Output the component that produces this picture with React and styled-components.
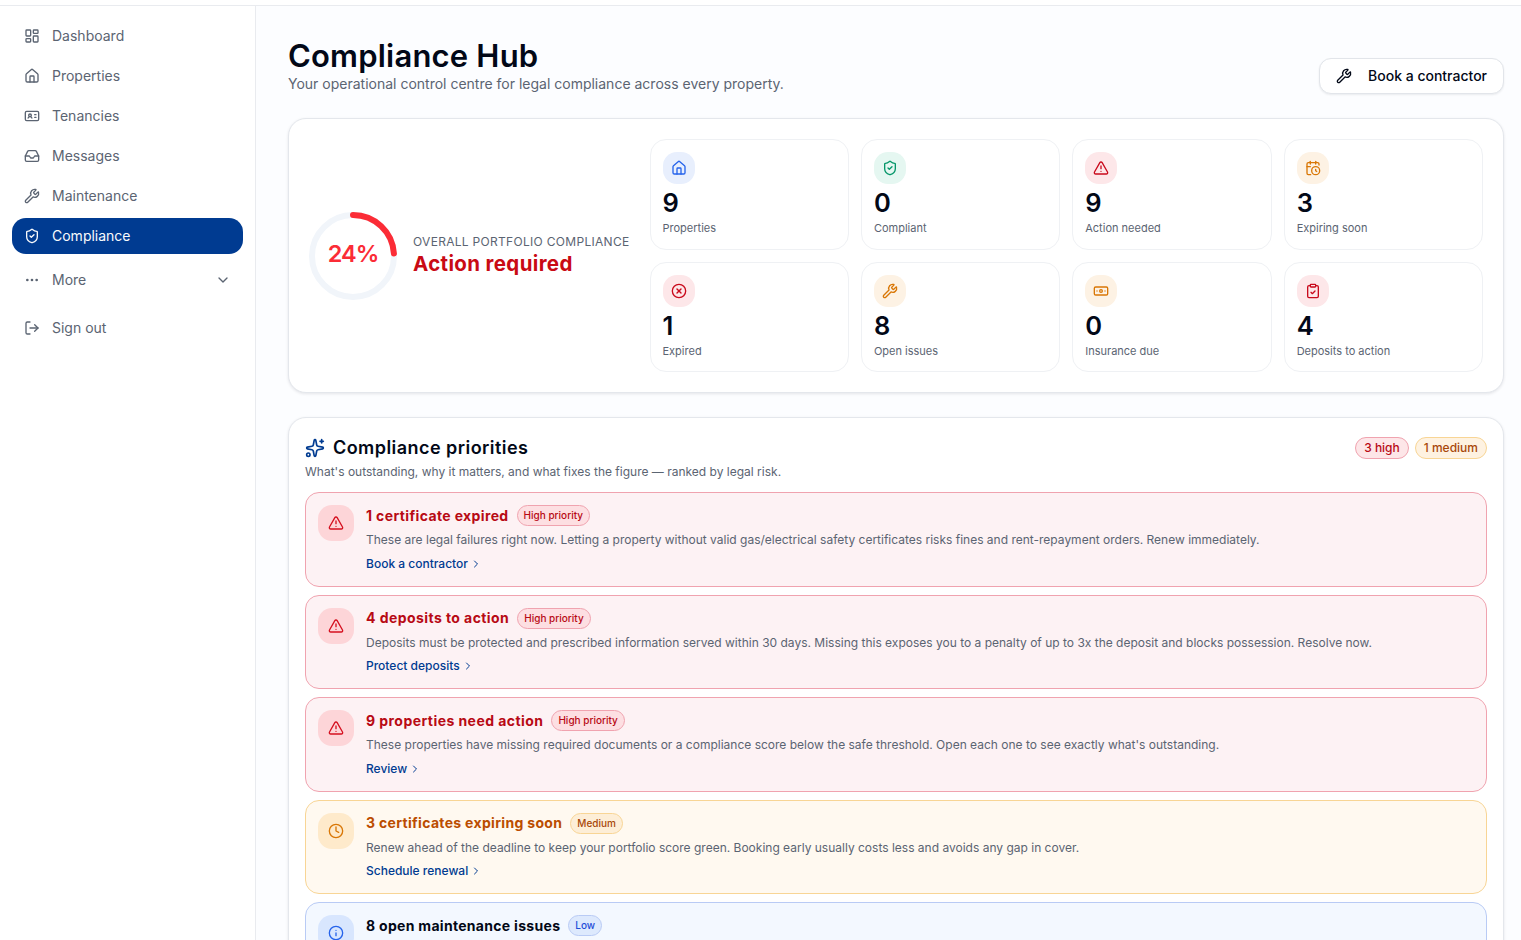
import React from 'react';
import styled, { createGlobalStyle, css } from 'styled-components';
import {
  LayoutDashboard,
  House,
  IdCard,
  Inbox,
  Wrench,
  ShieldCheck,
  Ellipsis,
  LogOut,
  ChevronDown,
  ChevronRight,
  TriangleAlert,
  CalendarClock,
  CircleX,
  Banknote,
  ClipboardCheck,
  Sparkles,
  Clock,
  Info,
} from 'lucide-react';

const GlobalStyle = createGlobalStyle`
  *, *::before, *::after {
    box-sizing: border-box;
  }

  body {
    margin: 0;
    height: 940px;
    overflow: hidden;
    background: #fcfdff;
    color: #020817;
    font-family: Inter, 'Liberation Sans', sans-serif;
    font-size: 14px;
    line-height: 20px;
  }

  h1, h2, h3, p {
    margin: 0;
  }

  svg {
    display: block;
    flex-shrink: 0;
  }
`;

const tones = {
  blue: { icon: '#2563eb', soft: '#e8effd' },
  green: { icon: '#059669', soft: '#e5f7f1' },
  red: { icon: '#c90a1c', soft: '#fde7e9' },
  amber: { icon: '#d97706', soft: '#fdf2e4' },
};

const levels = {
  high: { title: '#b80a14', bg: '#fdf2f4', border: '#f0a3af', tile: '#fdd5d8', icon: '#d5101f', badge: '#fddfe2', pill: '#fde6e8', badgeText: '#b80a14' },
  medium: { title: '#bb4d00', bg: '#fff9f0', border: '#f8d595', tile: '#feeacb', icon: '#d97706', badge: '#fdeed7', pill: '#fef2e1', badgeText: '#a8480a' },
  low: { title: '#020817', bg: '#f3f8ff', border: '#b9cbf5', tile: '#d8e6fe', icon: '#2563eb', badge: '#dde9fd', pill: '#e8effd', badgeText: '#1d4ed8' },
};

const Page = styled.div`
  display: flex;
  flex-direction: column;
  height: 940px;
`;

const TopBar = styled.header`
  flex: none;
  height: 6px;
  background: #fff;
  border-bottom: 1px solid #e9ebef;
`;

const Body = styled.div`
  flex: 1;
  min-height: 0;
  display: flex;
`;

const Sidebar = styled.nav`
  width: 256px;
  flex: none;
  display: flex;
  flex-direction: column;
  gap: 4px;
  padding: 12px;
  background: #fff;
  border-right: 1px solid #e9ebef;
`;

const NavItem = styled.a`
  display: flex;
  align-items: center;
  gap: 12px;
  height: 36px;
  padding: 0 12px;
  margin-top: ${props => props.$offset || 0}px;
  border-radius: 14px;
  color: ${props => (props.$active ? '#f8fafc' : '#5b6472')};
  background: ${props => (props.$active ? '#003b91' : 'transparent')};

  span {
    flex: 1;
  }
`;

const Main = styled.main`
  flex: 1;
  min-width: 0;
  overflow: hidden;
  padding: 32px 17px 0 32px;
`;

const PageHeader = styled.div`
  display: flex;
  align-items: flex-end;
  justify-content: space-between;
  margin-bottom: 24px;
`;

const display = css`
  font-family: Inter, 'Liberation Sans', sans-serif;
  font-weight: 600;
`;

const PageTitle = styled.h1`
  ${display}
  font-size: 31px;
  line-height: 36px;
  letter-spacing: 0.2px;
`;

const Subtitle = styled.p`
  color: #5b6472;
`;

const OutlineButton = styled.button`
  display: flex;
  align-items: center;
  gap: 16px;
  height: 36px;
  padding: 0 16px;
  border: 1px solid #e2e5ea;
  border-radius: 12px;
  background: #fff;
  color: #020817;
  font: 500 14px/20px Inter, sans-serif;
  box-shadow: 0 1px 2px rgba(15, 23, 42, 0.08);
`;

const Card = styled.section`
  border: 1px solid #e4e7ec;
  border-radius: 18px;
  background: #fff;
  box-shadow: 0 1px 3px rgba(15, 23, 42, 0.1);
`;

const Overview = styled(Card)`
  display: flex;
  align-items: center;
  gap: 20px;
  padding: 20px;
  margin-bottom: 24px;
`;

const Score = styled.div`
  display: flex;
  align-items: center;
  gap: 16px;
`;

const Gauge = styled.div`
  display: grid;
  place-items: center;

  > * {
    grid-area: 1 / 1;
  }
`;

const GaugeValue = styled.span`
  padding-bottom: 3px;
  font-size: 23.5px;
  font-weight: 600;
  line-height: 28px;
  letter-spacing: -1px;
  color: #fb2c36;
`;

const Eyebrow = styled.p`
  font-size: 12px;
  line-height: 16px;
  letter-spacing: 0.3px;
  text-transform: uppercase;
  white-space: nowrap;
  color: #5b6472;
`;

const Verdict = styled.p`
  ${display}
  font-size: 20.5px;
  font-weight: 700;
  line-height: 28px;
  letter-spacing: 0.35px;
  color: #c90a14;
`;

const Stats = styled.div`
  flex: 1;
  display: grid;
  grid-template-columns: repeat(4, 1fr);
  gap: 12px;
`;

const Stat = styled.div`
  padding: 12px;
  border: 1px solid #eff1f4;
  border-radius: 16px;
`;

const StatIcon = styled.div`
  display: grid;
  place-items: center;
  width: 32px;
  height: 32px;
  border-radius: 14px;
  color: ${props => tones[props.$tone].icon};
  background: ${props => tones[props.$tone].soft};
`;

const StatValue = styled.div`
  ${display}
  margin-top: 3px;
  padding-bottom: 1px;
  font-size: 25.5px;
  line-height: 32px;
`;

const StatLabel = styled.div`
  font-size: 11px;
  line-height: 16.5px;
  color: #5b6472;
`;

const Priorities = styled(Card)`
  padding: 16px;
`;

const PrioritiesHeader = styled.div`
  display: flex;
  align-items: flex-start;
  justify-content: space-between;
  margin-bottom: 12px;
`;

const SectionTitle = styled.h2`
  ${display}
  display: flex;
  align-items: center;
  gap: 8px;
  font-size: 18px;
  line-height: 28px;
  letter-spacing: 0.45px;

  svg {
    color: #003b91;
  }
`;

const SectionHint = styled.p`
  margin-top: 2px;
  font-size: 12px;
  line-height: 16px;
  color: #5b6472;
`;

const Pills = styled.div`
  display: flex;
  gap: 6px;
  padding-top: 3px;
`;

const Pill = styled.span`
  padding: 2px 8px;
  border: 1px solid ${props => levels[props.$level].border};
  border-radius: 999px;
  background: ${props => levels[props.$level].pill};
  color: ${props => levels[props.$level].badgeText};
  font-size: 12px;
  line-height: 16px;
  font-weight: 500;
`;

const SmallPill = styled(Pill)`
  padding: 2px 6px;
  background: ${props => levels[props.$level].badge};
  font-size: 10px;
  line-height: 15px;
`;

const List = styled.div`
  display: flex;
  flex-direction: column;
  gap: 8px;
`;

const Row = styled.article`
  display: flex;
  gap: 12px;
  padding: 12px;
  height: 94.5px;
  border: 1px solid ${props => levels[props.$level].border};
  border-radius: 14px;
  background: ${props => levels[props.$level].bg};
`;

const RowIcon = styled.div`
  display: grid;
  place-items: center;
  flex: none;
  width: 36px;
  height: 36px;
  border-radius: 14px;
  color: ${props => levels[props.$level].icon};
  background: ${props => levels[props.$level].tile};
`;

const RowHeading = styled.div`
  display: flex;
  align-items: center;
  gap: 8px;
`;

const RowTitle = styled.h3`
  ${display}
  font-size: 14px;
  font-weight: 700;
  line-height: 20px;
  letter-spacing: ${props => props.$tracking}px;
  color: ${props => levels[props.$level].title};
`;

const RowText = styled.p`
  margin-top: 4px;
  font-size: 12px;
  line-height: 19.5px;
  color: #5b6472;
`;

const RowLink = styled.a`
  display: flex;
  align-items: center;
  gap: 2px;
  margin-top: 6px;
  font-size: 12px;
  line-height: 16px;
  font-weight: 500;
  color: #003b91;
`;

const nav = [
  { label: 'Dashboard', icon: LayoutDashboard },
  { label: 'Properties', icon: House },
  { label: 'Tenancies', icon: IdCard },
  { label: 'Messages', icon: Inbox },
  { label: 'Maintenance', icon: Wrench },
  { label: 'Compliance', icon: ShieldCheck, active: true },
  { label: 'More', icon: Ellipsis, offset: 4, expandable: true },
  { label: 'Sign out', icon: LogOut, offset: 8 },
];

const stats = [
  { value: 9, label: 'Properties', icon: House, tone: 'blue' },
  { value: 0, label: 'Compliant', icon: ShieldCheck, tone: 'green' },
  { value: 9, label: 'Action needed', icon: TriangleAlert, tone: 'red' },
  { value: 3, label: 'Expiring soon', icon: CalendarClock, tone: 'amber' },
  { value: 1, label: 'Expired', icon: CircleX, tone: 'red' },
  { value: 8, label: 'Open issues', icon: Wrench, tone: 'amber' },
  { value: 0, label: 'Insurance due', icon: Banknote, tone: 'amber' },
  { value: 4, label: 'Deposits to action', icon: ClipboardCheck, tone: 'red' },
];

const priorities = [
  {
    level: 'high',
    icon: TriangleAlert,
    title: '1 certificate expired',
    tracking: 0.37,
    badge: 'High priority',
    text: 'These are legal failures right now. Letting a property without valid gas/electrical safety certificates risks fines and rent-repayment orders. Renew immediately.',
    action: 'Book a contractor',
  },
  {
    level: 'high',
    icon: TriangleAlert,
    title: '4 deposits to action',
    tracking: 0.43,
    badge: 'High priority',
    text: 'Deposits must be protected and prescribed information served within 30 days. Missing this exposes you to a penalty of up to 3x the deposit and blocks possession. Resolve now.',
    action: 'Protect deposits',
  },
  {
    level: 'high',
    icon: TriangleAlert,
    title: '9 properties need action',
    tracking: 0.44,
    badge: 'High priority',
    text: "These properties have missing required documents or a compliance score below the safe threshold. Open each one to see exactly what's outstanding.",
    action: 'Review',
  },
  {
    level: 'medium',
    icon: Clock,
    title: '3 certificates expiring soon',
    tracking: 0.32,
    badge: 'Medium',
    text: 'Renew ahead of the deadline to keep your portfolio score green. Booking early usually costs less and avoids any gap in cover.',
    action: 'Schedule renewal',
  },
  {
    level: 'low',
    icon: Info,
    title: '8 open maintenance issues',
    tracking: 0.3,
    badge: 'Low',
    text: '',
    action: '',
  },
];

const RADIUS = 41;
const CIRCUMFERENCE = 2 * Math.PI * RADIUS;

const ScoreGauge = ({ value }) =>
  <Gauge>
    <svg width="88" height="88" viewBox="0 0 88 88" fill="none" strokeWidth="6">
      <circle cx="44" cy="44" r={RADIUS} stroke="#f1f5fa" />
      <circle
        cx="44"
        cy="44"
        r={RADIUS}
        stroke="#fb2c36"
        strokeLinecap="round"
        strokeDasharray={`${CIRCUMFERENCE * value / 100} ${CIRCUMFERENCE}`}
        transform="rotate(-90 44 44)"
      />
    </svg>
    <GaugeValue>{value}%</GaugeValue>
  </Gauge>;

const Priority = ({ item }) =>
  <Row $level={item.level}>
    <RowIcon $level={item.level}>
      <item.icon size={16} />
    </RowIcon>
    <div>
      <RowHeading>
        <RowTitle $level={item.level} $tracking={item.tracking}>{item.title}</RowTitle>
        <SmallPill $level={item.level}>{item.badge}</SmallPill>
      </RowHeading>
      {item.text && <RowText>{item.text}</RowText>}
      {item.action &&
        <RowLink>
          {item.action}
          <ChevronRight size={12} />
        </RowLink>}
    </div>
  </Row>;

const App = () =>
  <Page>
    <GlobalStyle />
    <TopBar />
    <Body>
      <Sidebar>
        {nav.map(item =>
          <NavItem key={item.label} $active={item.active} $offset={item.offset}>
            <item.icon size={16} />
            <span>{item.label}</span>
            {item.expandable && <ChevronDown size={16} />}
          </NavItem>
        )}
      </Sidebar>
      <Main>
        <PageHeader>
          <div>
            <PageTitle>Compliance Hub</PageTitle>
            <Subtitle>Your operational control centre for legal compliance across every property.</Subtitle>
          </div>
          <OutlineButton>
            <Wrench size={16} />
            Book a contractor
          </OutlineButton>
        </PageHeader>
        <Overview>
          <Score>
            <ScoreGauge value={24} />
            <div>
              <Eyebrow>Overall portfolio compliance</Eyebrow>
              <Verdict>Action required</Verdict>
            </div>
          </Score>
          <Stats>
            {stats.map(stat =>
              <Stat key={stat.label}>
                <StatIcon $tone={stat.tone}>
                  <stat.icon size={16} />
                </StatIcon>
                <StatValue>{stat.value}</StatValue>
                <StatLabel>{stat.label}</StatLabel>
              </Stat>
            )}
          </Stats>
        </Overview>
        <Priorities>
          <PrioritiesHeader>
            <div>
              <SectionTitle>
                <Sparkles size={20} />
                Compliance priorities
              </SectionTitle>
              <SectionHint>What's outstanding, why it matters, and what fixes the figure — ranked by legal risk.</SectionHint>
            </div>
            <Pills>
              <Pill $level="high">3 high</Pill>
              <Pill $level="medium">1 medium</Pill>
            </Pills>
          </PrioritiesHeader>
          <List>
            {priorities.map(item => <Priority key={item.title} item={item} />)}
          </List>
        </Priorities>
      </Main>
    </Body>
  </Page>;

export default App;
